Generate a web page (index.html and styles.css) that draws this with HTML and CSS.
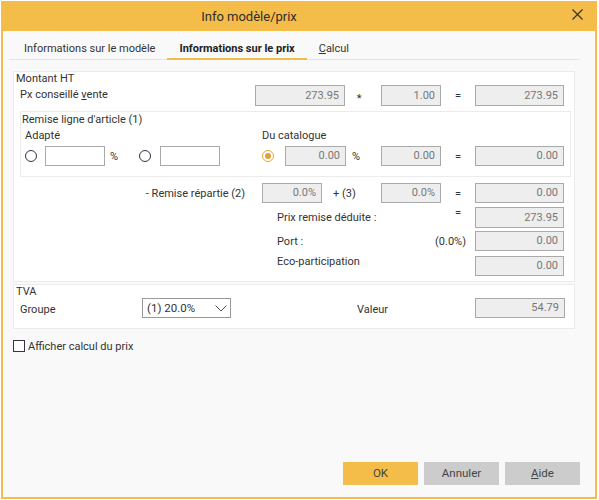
FILE: index.html
```html
<!DOCTYPE html>
<html lang="fr">
<head>
<meta charset="utf-8">
<title>Info modèle/prix</title>
<link rel="stylesheet" href="styles.css">
</head>
<body>
<div class="window">
  <div class="titlebar">
    <div class="title">Info modèle/prix</div>
    <div class="close-area">
      <svg class="close" width="11" height="11" viewBox="0 0 11 11"><path d="M0.5 0.5 L10.5 10.5 M10.5 0.5 L0.5 10.5" stroke="#333" stroke-width="1.2" fill="none"/></svg>
    </div>
  </div>
  <div class="content">
    <div class="tabs">
      <div class="tab tab-first">Informations sur le modèle</div>
      <div class="tab active">Informations sur le prix</div>
      <div class="tab"><u>C</u>alcul</div>
    </div>

    <div class="panel main">
      <div class="legend">Montant HT</div>
      <div class="row row-px">
        <div class="lbl lbl-px">Px conseillé <u>v</u>ente</div>
        <div class="fld w90">273.95</div>
        <div class="op op-star">*</div>
        <div class="fld w60">1.00</div>
        <div class="op op-eq">=</div>
        <div class="fld w89">273.95</div>
      </div>

      <div class="subpanel">
        <div class="sub-title">Remise ligne d'article (1)</div>
        <div class="sub-grid">
          <div class="sub-col">
            <div class="sub-head">Adapté</div>
            <div class="row ctl">
              <span class="radio"></span>
              <div class="inp w60"></div>
              <div class="op op-pct">%</div>
              <span class="radio"></span>
              <div class="inp w60 inp2"></div>
            </div>
          </div>
          <div class="sub-col">
            <div class="sub-head">Du catalogue</div>
            <div class="row ctl">
              <span class="radio on"></span>
              <div class="fld w61 fld-cat">0.00</div>
              <div class="op op-pct2">%</div>
              <div class="fld w60">0.00</div>
              <div class="op op-eq">=</div>
              <div class="fld w89">0.00</div>
            </div>
          </div>
        </div>
      </div>

      <div class="row row-rep">
        <div class="lbl lbl-rep">- Remise répartie (2)</div>
        <div class="fld w60">0.0%</div>
        <div class="op op-plus">+ (3)</div>
        <div class="fld w60">0.0%</div>
        <div class="op op-eq">=</div>
        <div class="fld w89">0.00</div>
      </div>
      <div class="row row-prix">
        <div class="lbl lbl-right">Prix remise déduite :</div>
        <div class="op op-eq op-high">=</div>
        <div class="fld w89 h21">273.95</div>
      </div>
      <div class="row row-port">
        <div class="lbl lbl-right">Port :</div>
        <div class="op op-portpct">(0.0%)</div>
        <div class="fld w89">0.00</div>
      </div>
      <div class="row row-eco">
        <div class="lbl lbl-right lbl-top">Eco-participation</div>
        <div class="fld w89">0.00</div>
      </div>
    </div>

    <div class="panel tva">
      <div class="legend legend-tva">TVA</div>
      <div class="row row-tva">
        <div class="lbl lbl-grp">Groupe</div>
        <div class="select">
          <span>(1) 20.0%</span>
          <svg width="12" height="7" viewBox="0 0 12 7"><path d="M0.5 0.5 L6 6 L11.5 0.5" stroke="#555" stroke-width="1" fill="none"/></svg>
        </div>
        <div class="lbl lbl-val">Valeur</div>
        <div class="fld w90">54.79</div>
      </div>
    </div>

    <label class="check"><span class="box"></span>Afficher calcul du prix</label>

    <div class="buttons">
      <div class="btn ok">OK</div>
      <div class="btn">Annuler</div>
      <div class="btn"><u>A</u>ide</div>
    </div>
  </div>
</div>
</body>
</html>
```

FILE: styles.css
```css
* { box-sizing: border-box; }
html, body { margin: 0; padding: 0; background: #ffffff; }
body {
  font-family: Roboto, "Noto Sans", "Liberation Sans", sans-serif;
  font-size: 11px;
  color: #333333;
}
u { text-decoration: underline; text-underline-offset: 1px; }

.window {
  margin: 1px 0 0 1px;
  width: 596px;
  height: 498px;
  border: 2px solid #f4bc48;
  border-top: 0;
  background: #f9f9f9;
  display: flex;
  flex-direction: column;
}

.titlebar {
  height: 30px;
  background: #f4bc48;
  display: flex;
  align-items: center;
  flex: none;
}
.title {
  flex: 1;
  text-align: center;
  font-size: 13px;
  color: #2e2e2e;
  padding-top: 1px;
}
.close-area {
  width: 100px;
  display: flex;
  justify-content: flex-end;
  padding-right: 12px;
  padding-bottom: 3px;
}

.content {
  flex: 1;
  display: flex;
  flex-direction: column;
  padding: 0 20px 12px 10px;
}

.tabs {
  display: flex;
  margin: 9px -5px 0 -4px;
  height: 20px;
  border-bottom: 1px solid #e4e4e4;
}
.tab {
  height: 20px;
  line-height: 18px;
  padding: 0 12px;
  border-bottom: 2px solid transparent;
  color: #333;
}
.tab-first { padding-left: 15px; }
.tab.active {
  font-weight: bold;
  border-bottom-color: #f4bc48;
  color: #222;
}

.panel {
  background: #ffffff;
  border: 1px solid #ebebeb;
}
.main { margin-top: 11px; padding-bottom: 5px; }
.legend { line-height: 13px; padding-left: 2px; }

.row { display: flex; align-items: center; }
.lbl { white-space: nowrap; }

.fld {
  height: 20px;
  background: #eeeeee;
  border: 1px solid #aaaaaa;
  color: #777777;
  text-align: right;
  padding-right: 5px;
  line-height: 18px;
  flex: none;
}
.h21 { height: 21px; line-height: 19px; }
.inp {
  height: 20px;
  background: #ffffff;
  border: 1px solid #aaaaaa;
  flex: none;
}
.w60 { width: 60px; }
.w61 { width: 61px; }
.w89 { width: 89px; }
.w90 { width: 90px; }

.op { flex: none; color: #333; }
.op-star { width: 36px; text-align: center; padding-right: 8px; padding-top: 5px; }
.op-eq { width: 34px; text-align: center; }

.row-px { height: 21px; }
.row-px .fld { height: 21px; line-height: 19px; }
.lbl-px { width: 241px; padding-left: 6px; margin-top: -3px; }

.subpanel {
  margin: 5px 3px 0 6px;
  border: 1px solid #ebebeb;
  padding-bottom: 10px;
}
.sub-title { line-height: 14px; padding: 1px 0 0 1px; }
.sub-grid {
  display: grid;
  grid-template-columns: 237px 1fr;
  padding-left: 4px;
  margin-top: 2px;
}
.sub-head { line-height: 14px; }
.ctl { margin-top: 3px; height: 20px; }

.radio {
  width: 12px;
  height: 12px;
  border-radius: 50%;
  border: 1.3px solid #2f3048;
  flex: none;
  display: flex;
  align-items: center;
  justify-content: center;
  margin-right: 8px;
}
.radio.on { border-color: #e8a83c; margin-right: 11px; }
.radio.on::after {
  content: "";
  width: 6px;
  height: 6px;
  border-radius: 50%;
  background: #dfa23a;
}
.op-pct { width: 34px; padding-left: 5px; }
.inp2 { margin-left: 1px; }
.op-pct2 { width: 35px; padding-left: 6px; }

.row-rep { margin-top: 6px; height: 20px; }
.lbl-rep { width: 231px; text-align: right; margin-right: 17px; }
.op-plus { width: 59px; padding-left: 11px; }

.row-prix { margin-top: 4px; height: 21px; }
.lbl-right { flex: 1; padding-left: 263px; }
.op-high { align-self: flex-start; line-height: 12px; }
.row-prix .fld, .row-port .fld, .row-eco .fld { margin-right: 10px; }

.row-port { margin-top: 3px; height: 20px; }
.op-portpct { margin-right: 9px; }

.row-eco { margin-top: 5px; height: 20px; }
.lbl-top { align-self: flex-start; line-height: 12px; }

.tva { margin-top: 2px; padding-bottom: 10px; }
.legend-tva { line-height: 12px; padding-top: 1px; }
.row-tva { height: 20px; }
.lbl-grp { width: 128px; padding-left: 6px; margin-top: 3px; }
.select {
  width: 89px;
  height: 20px;
  border: 1px solid #999999;
  background: #ffffff;
  display: flex;
  align-items: center;
  justify-content: space-between;
  padding: 0 3px 0 4px;
  color: #333;
  font-size: 11.5px;
}
.lbl-val { margin-left: 126px; width: 118px; margin-top: 3px; }

.check {
  display: flex;
  align-items: center;
  margin-top: 11px;
  height: 12px;
}
.box {
  width: 12px;
  height: 12px;
  border: 1px solid #3a3346;
  background: #ffffff;
  margin-right: 3px;
}

.buttons {
  margin-top: auto;
  margin-right: -5px;
  display: flex;
  justify-content: flex-end;
  gap: 6px;
}
.btn {
  width: 75px;
  height: 23px;
  line-height: 23px;
  text-align: center;
  background: #cccccc;
  color: #444444;
  font-size: 11.5px;
}
.btn.ok { background: #f4bc48; }
```
